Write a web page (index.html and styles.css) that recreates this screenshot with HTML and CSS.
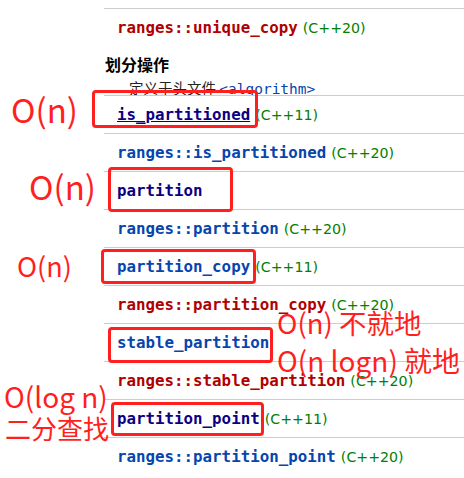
FILE: index.html
```html
<!DOCTYPE html>
<html lang="zh">
<head>
<meta charset="utf-8">
<title>划分操作</title>
<link rel="stylesheet" href="styles.css">
</head>
<body>
<div class="page">
  <div class="list">
    <div class="row"><span class="fn new">ranges::unique_copy</span> <span class="mark">(C++20)</span></div>
    <div class="heading">
      <div class="h3">划分操作</div>
      <div class="hdr">定义于头文件 <span class="hfile">&lt;algorithm&gt;</span></div>
    </div>
    <div class="row"><span class="fn visited hover">is_partitioned</span> <span class="mark">(C++11)</span></div>
    <div class="row"><span class="fn link">ranges::is_partitioned</span> <span class="mark">(C++20)</span></div>
    <div class="row"><span class="fn visited">partition</span></div>
    <div class="row"><span class="fn link">ranges::partition</span> <span class="mark">(C++20)</span></div>
    <div class="row"><span class="fn link">partition_copy</span> <span class="mark">(C++11)</span></div>
    <div class="row"><span class="fn new">ranges::partition_copy</span> <span class="mark">(C++20)</span></div>
    <div class="row"><span class="fn link">stable_partition</span></div>
    <div class="row"><span class="fn new">ranges::stable_partition</span> <span class="mark">(C++20)</span></div>
    <div class="row"><span class="fn visited">partition_point</span> <span class="mark">(C++11)</span></div>
    <div class="row"><span class="fn link">ranges::partition_point</span> <span class="mark">(C++20)</span></div>
  </div>

  <div class="box box1"></div>
  <div class="box box2"></div>
  <div class="box box3"></div>
  <div class="box box4"></div>
  <div class="box box5"></div>

  <div class="note note-a">O(n)</div>
  <div class="note note-b">O(n)</div>
  <div class="note note-c">O(n)</div>
  <div class="note note-d">O(n) 不就地</div>
  <div class="note note-e">O(n logn) 就地</div>
  <div class="note note-f">O(log n)</div>
  <div class="note note-g">二分查找</div>
</div>
</body>
</html>
```

FILE: styles.css
```css
html, body {
  margin: 0;
  padding: 0;
  background: #ffffff;
}

.page {
  position: relative;
  width: 464px;
  height: 478px;
  overflow: hidden;
  font-family: "DejaVu Sans", sans-serif;
}

.list {
  margin-left: 104px;
  padding-top: 8px;
}

.row {
  border-top: 1px solid #cccccc;
  height: 37px;
  line-height: 37px;
  padding-left: 13px;
  white-space: nowrap;
  background: #ffffff;
}

.fn {
  font-family: "DejaVu Sans Mono", monospace;
  font-weight: bold;
  font-size: 15.8px;
}

.new { color: #b00000; }
.link { color: #0645ad; }
.visited { color: #0b0080; }
.hover { text-decoration: underline; }

.mark {
  font-size: 14.2px;
  color: #008000;
}

.heading {
  height: 49px;
  overflow: hidden;
  padding-left: 1px;
}

.h3 {
  margin-top: 10px;
  font-family: "Noto Sans CJK SC", sans-serif;
  font-weight: bold;
  font-size: 16px;
  line-height: 16px;
  color: #000000;
}

.hdr {
  margin-top: 8px;
  padding-left: 24px;
  font-family: "Noto Sans CJK SC", sans-serif;
  font-size: 14.5px;
  line-height: 16px;
  color: #222222;
  white-space: nowrap;
}

.hfile {
  font-family: "DejaVu Sans Mono", monospace;
  font-size: 14.5px;
  color: #0645ad;
}

.box {
  position: absolute;
  border: 3px solid #ff1f1f;
  border-radius: 4px;
  box-sizing: border-box;
}

.box1 { left: 92px; top: 90px; width: 166px; height: 38px; }
.box2 { left: 108px; top: 167px; width: 125px; height: 45px; }
.box3 { left: 101px; top: 249px; width: 155px; height: 35px; }
.box4 { left: 108px; top: 327px; width: 165px; height: 36px; }
.box5 { left: 111px; top: 402px; width: 153px; height: 34px; }

.note {
  position: absolute;
  font-family: "Noto Sans CJK SC", sans-serif;
  color: #ff1f1f;
  line-height: 1;
  white-space: nowrap;
}

.note-a { left: 11px; top: 93px; font-size: 33px; }
.note-b { left: 29px; top: 170px; font-size: 33px; }
.note-c { left: 17px; top: 252px; font-size: 27px; }
.note-d { left: 277px; top: 309px; font-size: 27.5px; }
.note-e { left: 277px; top: 346px; font-size: 28px; }
.note-f { left: 4px; top: 382px; font-size: 28px; }
.note-g { left: 5px; top: 415px; font-size: 26px; }
```
